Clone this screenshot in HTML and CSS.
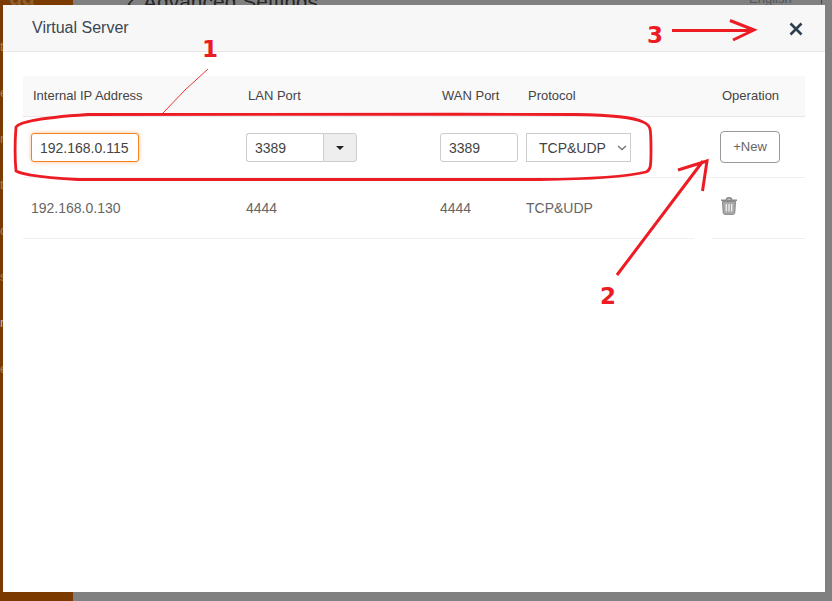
FILE: index.html
```html
<!DOCTYPE html>
<html lang="en">
<head>
<meta charset="utf-8">
<title>Virtual Server</title>
<link rel="stylesheet" href="styles.css">
</head>
<body>
<div class="backdrop">
  <div class="sidebar">
    <span class="logo-peek">dd</span>
    <ul class="nav">
      <li>t</li><li>e</li><li>r</li><li>t</li><li>c</li><li>s</li><li class="nav-on">n</li><li>e</li>
    </ul>
  </div>
  <div class="page-title"><span class="page-back">‹</span>Advanced Settings</div>
  <div class="lang">English</div>
  <div class="lang-sep"></div>
</div>
<main class="modal">
  <header class="modal-head">
    <h1 class="modal-title">Virtual Server</h1>
    <button class="close" type="button" aria-label="Close">
      <svg class="close-icon" viewBox="0 0 14 14"><path d="M1.500 1.500 12.500 12.500M12.500 1.500 1.500 12.500"/></svg>
    </button>
  </header>
  <div class="modal-body">
    <table class="grid">
      <thead>
        <tr>
          <th class="c-ip">Internal IP Address</th>
          <th class="c-lan">LAN Port</th>
          <th class="c-wan">WAN Port</th>
          <th class="c-proto">Protocol</th>
          <th class="c-op">Operation</th>
        </tr>
      </thead>
      <tbody>
        <tr>
          <td><input class="field field-ip" type="text" value="192.168.0.115"></td>
          <td>
            <div class="combo">
              <input class="combo-input" type="text" value="3389">
              <span class="combo-btn"><span class="caret"></span></span>
            </div>
          </td>
          <td><input class="field field-wan" type="text" value="3389"></td>
          <td><select class="proto"><option>TCP&amp;UDP</option></select></td>
          <td><button class="new" type="button">+New</button></td>
        </tr>
        <tr>
          <td>192.168.0.130</td>
          <td>4444</td>
          <td>4444</td>
          <td>TCP&amp;UDP</td>
          <td>
            <svg class="trash" viewBox="0 0 18 19">
              <path class="trash-lid" d="M1 4.200h16M6.500 3.600C6.500 1.300 11.500 1.300 11.500 3.600"/>
              <path class="trash-can" d="M2.500 5.500h13l-.7 11.300c-.1 1-.7 1.600-1.600 1.600H4.800c-.9 0-1.500-.6-1.600-1.600z"/>
              <path class="trash-bars" d="M6.300 8v7.500M9 8v7.500M11.700 8v7.500"/>
            </svg>
          </td>
        </tr>
      </tbody>
    </table>
  </div>
</main>
<svg class="marks" viewBox="0 0 832 601" aria-hidden="true">
  <rect class="erase" x="694" y="236" width="18" height="4"/>
  <path class="ring" d="M88 114.500C200 114 400 114 576 114.500C610 115 635 118 643 122C651 125 651 128 651 150C651 165 651 170 646 172C630 176 600 179 540 179.500L78 179.500C50 178 25 176 16 171C15 160 15 140 16 127C20 121 50 117 88 114.500Z"/>
  <path class="thin" d="M208 69 185 90 163 113"/>
  <path class="arrow" d="M617 275 703 161M678 170 707 161 702.500 191M672 30.500H753M730 20.500 754 30 733 40"/>
  <text class="num" x="202" y="57">1</text>
  <text class="num" x="600" y="304">2</text>
  <text class="num" x="647" y="43">3</text>
</svg>
</body>
</html>
```
FILE: styles.css
```css
* { box-sizing: border-box; }
html, body { height: 100%; }
body {
  margin: 0;
  padding: 5px 7px 9px 3px;
  display: flex;
  background: #808080;
  font-family: "Liberation Sans", Arial, sans-serif;
  overflow: hidden;
}
.backdrop { position: absolute; inset: 0; overflow: hidden; }
.sidebar { position: absolute; left: 0; top: 0; bottom: 0; width: 73px; background: #7a3a00; }
.logo-peek { position: absolute; left: 9px; top: -15px; font-size: 22px; font-weight: bold; letter-spacing: -1px; color: #8f5f2e; }
.nav { margin: 0; padding: 39px 0 0; list-style: none; font-size: 13px; color: #a58255; }
.nav li { height: 46px; line-height: 16px; }
.nav .nav-on { color: #b9b9c4; }
.page-title { position: absolute; left: 127px; top: -10px; font-size: 21px; color: #262626; }
.page-back { display: inline-block; width: 16px; }
.lang { position: absolute; left: 749px; top: -9px; font-size: 13px; color: #555; }
.lang-sep { position: absolute; left: 821px; top: 0; width: 1px; height: 4px; background: #444; }

.modal { position: relative; flex: 1; background: #fff; }
.modal-head {
  height: 47px;
  display: flex;
  align-items: center;
  justify-content: space-between;
  padding: 0 22px 0 29px;
  background: #f7f7f7;
  border-bottom: 1px solid #e7e7e7;
}
.modal-title { margin: 0; font-size: 16px; font-weight: normal; color: #3a4654; }
.close { padding: 0; border: 0; background: none; display: flex; margin-top: 2px; }
.close-icon { width: 14px; height: 14px; fill: none; stroke: #2c3e50; stroke-width: 2.6; }

.modal-body { padding: 24px 20px 0; }
.grid { width: 782px; table-layout: fixed; border-collapse: collapse; font-size: 14px; color: #666; }
.c-ip { width: 215px; }
.c-lan { width: 194px; }
.c-wan { width: 86px; }
.c-proto { width: 194px; }
.c-op { width: 93px; }
.grid th {
  height: 40px;
  padding: 0 0 0 10px;
  text-align: left;
  font-size: 13px;
  font-weight: normal;
  color: #444;
  background: #f9f9f9;
  border-bottom: 1px solid #e8e8e8;
}
.grid td { height: 61px; padding: 0 0 0 8px; border-bottom: 1px solid #f0f0f0; }

.field, .combo-input, .proto, .new { font: inherit; }
.field {
  display: block;
  height: 29px;
  margin-top: 2px;
  padding: 0 8px;
  color: #444;
  border: 1px solid #ccc;
  border-radius: 3px;
  outline: none;
}
.field-ip { width: 108px; border-color: #f58220; box-shadow: 0 0 4px rgba(245, 130, 32, .5); }
.field-wan { width: 78px; }
.combo { display: flex; width: 111px; height: 29px; margin-top: 2px; }
.combo-input {
  width: 77px;
  padding: 0 8px;
  color: #444;
  border: 1px solid #ccc;
  border-right: 0;
  border-radius: 3px 0 0 3px;
  outline: none;
}
.combo-btn {
  flex: 1;
  display: flex;
  align-items: center;
  justify-content: center;
  background: #eee;
  border: 1px solid #ccc;
  border-radius: 0 3px 3px 0;
}
.caret { border: 4px solid transparent; border-top-color: #222; border-bottom: 0; }
.proto {
  display: block;
  width: 105px;
  height: 29px;
  margin-top: 2px;
  padding-left: 12px;
  color: #444;
  appearance: none;
  background: #fff url("data:image/svg+xml,%3Csvg xmlns='http://www.w3.org/2000/svg' width='10' height='6'%3E%3Cpath d='M1 1l4 3.500L9 1' fill='none' stroke='%23777' stroke-width='1.400'/%3E%3C/svg%3E") no-repeat right 3px center;
  border: 1px solid #ccc;
  border-radius: 0;
}
.new {
  display: block;
  width: 60px;
  height: 32px;
  font-size: 13px;
  color: #666;
  background: #fff;
  border: 1px solid #999;
  border-radius: 4px;
}
.trash { display: block; width: 18px; height: 19px; margin: -4px 0 0 0; fill: none; stroke: #8a8a8a; }
.trash-lid { stroke-width: 1.600; }
.trash-can { fill: #a8a8a8; stroke: #8a8a8a; stroke-width: 1; }
.trash-bars { stroke: #eee; stroke-width: 1.300; }

.marks { position: absolute; left: 0; top: 0; width: 832px; height: 601px; pointer-events: none; }
.erase { fill: #fff; }
.ring, .arrow, .thin { fill: none; stroke: #ed1c24; }
.ring { stroke-width: 2.800; }
.arrow { stroke-width: 3; }
.thin { stroke-width: .9; }
.num { font-family: "DejaVu Sans", sans-serif; font-size: 23px; font-weight: bold; fill: #ed1c24; }
```
